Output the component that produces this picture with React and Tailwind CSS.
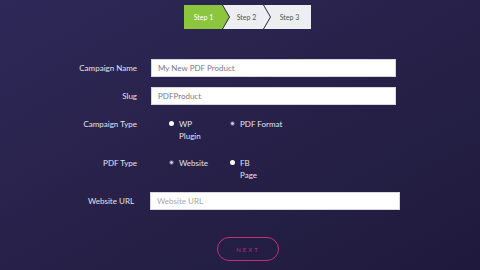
import { useState } from 'react'

const font = { fontFamily: 'Lato, "Open Sans", sans-serif' }

function Stepper() {
  return (
    <div className="flex h-[24px] mt-[5px] ml-[184px]">
      <div className="w-[45px] h-full bg-[#8cc63f] flex items-center justify-center pr-[6px] text-[7px] text-white [clip-path:polygon(0_0,calc(100%-7px)_0,100%_50%,calc(100%-7px)_100%,0_100%)]">
        Step 1
      </div>
      <div className="w-[47px] -ml-[6px] h-full bg-[#eceef1] flex items-center justify-center text-[7px] text-[#555] [clip-path:polygon(0_0,calc(100%-7px)_0,100%_50%,calc(100%-7px)_100%,0_100%,7px_50%)]">
        Step 2
      </div>
      <div className="w-[47px] -ml-[6px] h-full bg-[#eceef1] flex items-center justify-center pl-[4px] text-[7px] text-[#555] [clip-path:polygon(0_0,100%_0,100%_100%,0_100%,7px_50%)]">
        Step 3
      </div>
    </div>
  )
}

function TextRow({ label, value, placeholder, labelW, inputW, gap }) {
  return (
    <div className="flex items-center">
      <div className={`${labelW} text-right text-[8px] text-[#e4e2f2]`}>{label}</div>
      <input
        readOnly
        value={value}
        placeholder={placeholder}
        className={`${gap} ${inputW} h-[18px] bg-white border border-[#d6d6de] px-[6px] text-[8px] text-[#7a7a85] placeholder:text-[#a8a8b2] outline-none`}
        style={font}
      />
    </div>
  )
}

function Radio({ checked, children }) {
  return (
    <div className="flex items-start gap-[5px]">
      <span
        className={`mt-[3px] w-[5px] h-[5px] rounded-full shrink-0 ${
          checked ? 'bg-white' : 'bg-[#c9c7dc] border border-[#4a4470]'
        }`}
      />
      <span className="text-[8px] leading-[12px] text-[#e4e2f2]">{children}</span>
    </div>
  )
}

export default function App() {
  const [campaignType] = useState('wp')
  const [pdfType] = useState('fb')

  return (
    <div
      className="w-[480px] h-[270px] overflow-hidden bg-gradient-to-br from-[#2e2858] via-[#272149] to-[#1f1a3c] flex flex-col"
      style={font}
    >
      <Stepper />

      <div className="mt-[30px] flex flex-col gap-[10px]">
        <TextRow label="Campaign Name" value="My New PDF Product" labelW="w-[137px]" inputW="w-[245px]" gap="ml-[14px]" />
        <TextRow label="Slug" value="PDFProduct" labelW="w-[137px]" inputW="w-[245px]" gap="ml-[14px]" />
      </div>

      <div className="mt-[13px] flex">
        <div className="w-[137px] text-right text-[8px] leading-[12px] text-[#e4e2f2]">Campaign Type</div>
        <div className="ml-[32px] w-[61px]">
          <Radio checked={campaignType === 'wp'}>WP<br />Plugin</Radio>
        </div>
        <Radio checked={campaignType === 'pdf'}>PDF Format</Radio>
      </div>

      <div className="mt-[15px] flex">
        <div className="w-[137px] text-right text-[8px] leading-[12px] text-[#e4e2f2]">PDF Type</div>
        <div className="ml-[32px] w-[61px]">
          <Radio checked={pdfType === 'web'}>Website</Radio>
        </div>
        <Radio checked={pdfType === 'fb'}>FB<br />Page</Radio>
      </div>

      <div className="mt-[11px]">
        <TextRow label="Website URL" value="" placeholder="Website URL" labelW="w-[134px]" inputW="w-[250px]" gap="ml-[16px]" />
      </div>

      <div className="mt-[27px] flex justify-center">
        <button
          type="button"
          className="ml-[16px] w-[62px] h-[24px] rounded-full border-[1.5px] border-[#c2307a] text-[6px] tracking-[2px] text-[#b23272]"
        >
          NEXT
        </button>
      </div>
    </div>
  )
}
